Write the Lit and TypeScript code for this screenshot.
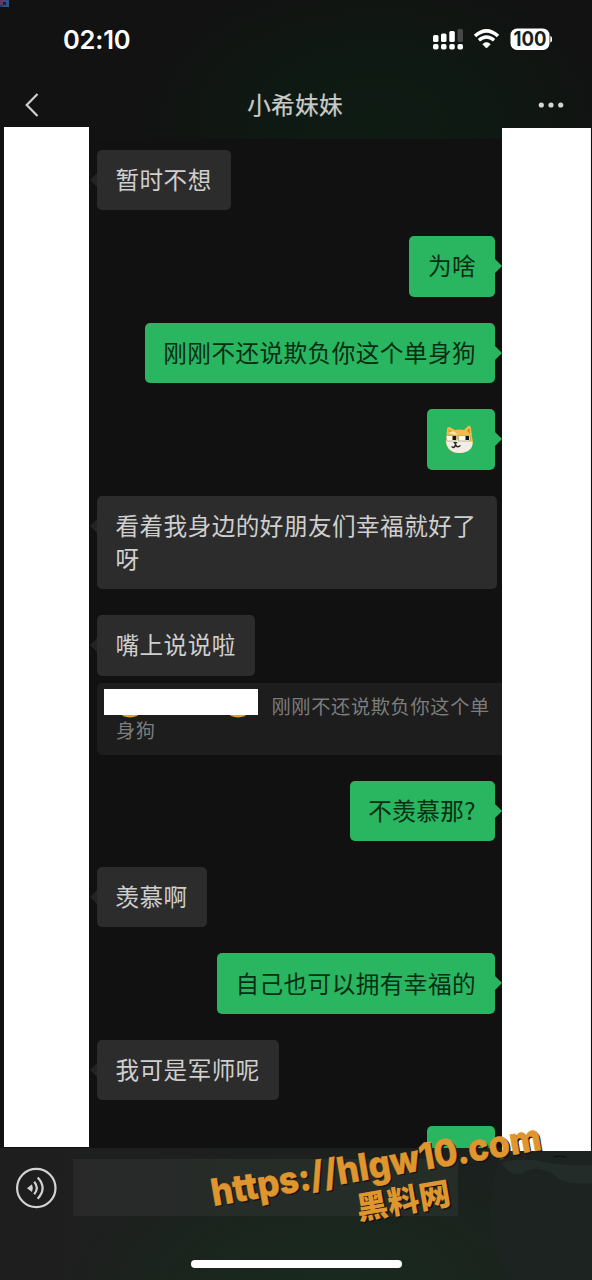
import { LitElement, html, svg, css } from "lit";
import { customElement, property } from "lit/decorators.js";

type Message = { side: "in" | "out"; text?: string; kind?: "doge" | "cut"; quote?: boolean };

const MESSAGES: Message[] = [
  { side: "in", text: "暂时不想" },
  { side: "out", text: "为啥" },
  { side: "out", text: "刚刚不还说欺负你这个单身狗" },
  { side: "out", kind: "doge" },
  { side: "in", text: "看着我身边的好朋友们幸福就好了呀" },
  { side: "in", text: "嘴上说说啦", quote: true },
  { side: "out", text: "不羡慕那?" },
  { side: "in", text: "羡慕啊" },
  { side: "out", text: "自己也可以拥有幸福的" },
  { side: "in", text: "我可是军师呢" },
  { side: "out", kind: "cut" },
];

const doge = svg`
  <path d="M2 4 Q2.500 1.500 4.500 2 L10 5 Q14 3.800 19 5 L23.500 .8 Q25.500 .3 26 3 L27 12 Q29 18 26 23 Q22 28 14 28 Q5 27.500 2 21 Q0 17 1.500 11 Z" fill="#f5bd45"/>
  <path d="M22 5.500 L24.500 3 L25 9 Z" fill="#c98528"/>
  <path d="M3.500 4 L7 6 L3.500 9 Z" fill="#dfa033"/>
  <path d="M1 15 Q6 9 13 15 Q20 15 27.500 17 Q28 23 23 26 Q18 28.300 12 27.800 Q4 27 1.800 20 Z" fill="#f0eee6"/>
  <path d="M3 8 Q10 4 12 10 Z" fill="#ffe9a8"/>
  <path d="M1 10.500 H11 V16 H2 Z M13.500 10.500 H25 V16 H13.500 Z" fill="#fffbe6" stroke="#a5987c" stroke-width=".7"/>
  <path d="M7.500 11 h3.500 v4 h-3.500z M20.500 11 h3.500 v4 h-3.500z" fill="#151515"/>
  <path d="M8 17 h4.500 l-2 2.700z" fill="#332820"/>
  <path d="M6.500 21.500 Q9.500 24 10.500 19.500 Q12 23.500 15.500 20.500" fill="none" stroke="#332820" stroke-width="1.500"/>
`;

@customElement("chat-bubble")
export class ChatBubble extends LitElement {
  @property({ attribute: false }) message!: Message;

  static styles = css`
    :host { display: block; }
    .row { display: flex; }
    .row.out { justify-content: flex-end; padding-right: 7px; }
    .row.in { padding-left: 8px; }
    .bubble {
      position: relative;
      box-sizing: border-box;
      min-height: 60.5px;
      max-width: 399.5px;
      padding: 13.2px 19px 13.8px 18.5px;
      border-radius: 5px;
      font-size: 23.6px;
      line-height: 33.2px;
      letter-spacing: 0.46px;
      word-break: break-all;
    }
    .in .bubble { background: #2c2c2c; color: #cfcfcf; }
    .out .bubble { background: #2ab561; color: #052e12; }
    .bubble::after {
      content: "";
      position: absolute;
      top: 23px;
      border: 7.5px solid transparent;
    }
    .in .bubble::after { left: -7px; border-left: 0; border-right: 7px solid #232323; }
    .out .bubble::after { right: -7px; border-right: 0; border-left: 7px solid #2ab561; }
    .bubble.doge { width: 68.500px; padding: 16px 19px; }
    .bubble.doge svg { display: block; width: 29px; height: 29px; margin-left: -1px; }
    .bubble.cut { width: 68.500px; }
    .quote {
      box-sizing: border-box;
      height: 72px;
      margin: 7px 0 0 8px;
      padding: 11px 8px 10px 19px;
      border-radius: 5px 0 0 5px;
      background: #1d1d1d;
      color: #7c7c7c;
      font-size: 19.2px;
      line-height: 24.500px;
      letter-spacing: 0.66px;
      word-break: break-all;
    }
    .mask { display: inline-block; width: 153.500px; height: 29px; margin: -6px 14px -6px -12px; vertical-align: 2px; letter-spacing: 0; }
    .mask svg { display: block; }
  `;

  render() {
    const m = this.message;
    return html`
      <div class="row ${m.side}">
        <div class="bubble ${m.kind ?? ""}">${m.kind === "doge" ? html`<svg viewBox="0 0 29 29">${doge}</svg>` : m.text ?? ""}</div>
      </div>
      ${m.quote
        ? html`<div class="quote"><span class="mask"><svg width="154" height="29" viewBox="0 0 154 29">
            <ellipse cx="26" cy="24.500" rx="9" ry="3.900" fill="#dca43c"/>
            <ellipse cx="134" cy="24.500" rx="9" ry="3.900" fill="#dca43c"/>
            <rect width="154" height="26" fill="#fff"/></svg></span>刚刚不还说欺负你这个单身狗</div>`
        : ""}
    `;
  }
}

@customElement("app-root")
export class AppRoot extends LitElement {
  static styles = css`
    :host {
      display: block;
      font-family: "Noto Sans CJK SC", sans-serif;
    }
    .screen {
      position: relative;
      display: flex;
      flex-direction: column;
      width: 592px;
      height: 1280px;
      overflow: hidden;
      background: radial-gradient(ellipse 235px 145px at 375px 120px, #0e1b13 0, #0f1913 45%, #111211 100%) #111;
    }
    .corner { position: absolute; left: 0; top: 0; width: 9px; height: 7px; }
    .status { display: flex; align-items: center; height: 78px; padding: 0 40px 0 63px; }
    .time { flex: 1; margin-top: 2px; color: #fff; font: 600 25.500px/30px Inter, sans-serif; letter-spacing: -0.2px; }
    .signals { display: block; width: 120px; height: 24px; }
    .level { font: 700 20px Inter, sans-serif; }
    .nav { display: grid; grid-template-columns: 90px 1fr 90px; align-items: center; height: 49px; color: #c9cbc9; }
    .back { margin: 4px 0 0 24px; }
    .title { margin: 2px 2px 0 0; text-align: center; font-size: 23.600px; line-height: 34px; letter-spacing: 0.3px; font-weight: 400; -webkit-text-stroke: 0.25px #c9cbc9; }
    .more { margin: 4px 0 0 35px; }
    .body { display: grid; grid-template-columns: 85px 413px 89px; height: 1021px; padding-left: 4px; }
    .blank { height: 1020px; background: #fff; }
    .blank.right { height: 1023px; margin-top: 1px; position: relative; border-right: 1px solid #eee; box-sizing: border-box; z-index: 1; }
    .chat {
      display: flex;
      flex-direction: column;
      gap: 25.920px;
      box-sizing: border-box;
      height: 1009px;
      margin-top: 12px;
      padding-top: 10.700px;
      background: #111;
      overflow: hidden;
    }
    .chat > * { flex: none; }
    .composer {
      position: relative;
      flex: 1;
      display: flex;
      flex-direction: column;
      background: radial-gradient(ellipse 260px 130px at 330px 135px, #192a20 0, #1a241d 60%, #1e1e1e00 100%), linear-gradient(90deg, #1e1e1e 0, #1d201e 50%, #1b211e 85%);
    }
    .tools { display: flex; align-items: flex-start; gap: 16px; padding: 11px 0 0 15px; }
    .voice { margin-top: 8px; }
    .field { width: 385px; height: 57px; background: linear-gradient(90deg, #282828, #262d29 50%, #252d29); }
    .smear { position: absolute; left: 480px; top: 3px; }
    .home { width: 211px; height: 8px; margin: 44px 0 0 191px; border-radius: 4px; background: #fff; }
    .watermark { position: absolute; z-index: 2; left: 190px; top: 1100px; }
    .link { font: 800 35px Inter, sans-serif; }
    .site { font: 900 31.5px "Noto Sans CJK SC", sans-serif; }
  `;

  render() {
    return html`
      <div class="screen">
        <svg class="corner" viewBox="0 0 9 7">
          <rect width="9" height="7" fill="#315289"/><rect width="3" height="7" fill="#663760"/>
          <rect x="3" y="2" width="3" height="3" fill="#172238"/><rect y="5" width="3" height="2" fill="#213c70"/>
        </svg>
        <div class="status">
          <div class="time">02:10</div>
          <svg class="signals" viewBox="0 0 120 24">
            <g fill="#fff">
              <rect x="1" y="8" width="5.500" height="7" rx="1.500"/><rect x="9" y="6.500" width="5.500" height="8.500" rx="1.500"/>
              <rect x="17.300" y="4" width="5.500" height="11" rx="1.500"/><rect x="25.500" y="2" width="5.500" height="13" rx="1.500" fill="#454846"/>
              <rect x="1" y="17" width="5.500" height="5.500" rx="1.800"/><rect x="9" y="17" width="5.500" height="5.500" rx="1.800"/>
              <rect x="17.300" y="17" width="5.500" height="5.500" rx="1.800"/><rect x="25.500" y="17" width="5.500" height="5.500" rx="1.800"/>
              <path d="M50.800 17.200 Q54.500 14 58.200 17.200 L54.500 21Z" stroke="#fff" stroke-width=".8" stroke-linejoin="round"/>
              <rect x="78.500" y="1.500" width="39" height="21.500" rx="6.500"/><path d="M118.300 9 q2 .6 2 3.200 t-2 3.200z"/>
            </g>
            <path d="M43 9 Q54.500 -1.300 66 9" fill="none" stroke="#fff" stroke-width="3.600"/>
            <path d="M46.900 13.300 Q54.500 6.700 62.100 13.300" fill="none" stroke="#fff" stroke-width="3.300"/>
            <text class="level" x="81.500" y="19.300" textLength="33" lengthAdjust="spacingAndGlyphs" fill="#18201b">100</text>
          </svg>
        </div>
        <div class="nav">
          <svg class="back" width="16" height="26" viewBox="0 0 16 26"><path d="M13.500 2 L2.700 13 L13.500 24" fill="none" stroke="#d0d0d0" stroke-width="2.200"/></svg>
          <div class="title">小希妹妹</div>
          <svg class="more" width="28" height="8" viewBox="0 0 28 8" fill="#d4d4d4"><circle cx="4.300" cy="4" r="2.600"/><circle cx="14" cy="4" r="2.600"/><circle cx="23.700" cy="4" r="2.600"/></svg>
        </div>
        <div class="body">
          <div class="blank"></div>
          <div class="chat">${MESSAGES.map((m) => html`<chat-bubble .message=${m}></chat-bubble>`)}</div>
          <div class="blank right"></div>
        </div>
        <div class="composer">
          <svg class="smear" width="112" height="129" viewBox="0 0 112 129">
            <path d="M18 10 Q6 60 12 90 Q18 110 34 129 H112 V0 H24Z" fill="#1c2320"/>
            <path d="M22 12 Q40 6 60 10 Q80 15 112 14 V32 Q95 34 80 29 Q60 10 40 23 Q28 24 22 12Z" fill="#232c28"/>
            <path d="M20 8 l4 -1" stroke="#8b908d" fill="none"/>
            <path d="M73 6 q6 -2 14 0" stroke="#0d100e" fill="none"/>
          </svg>
          <div class="tools">
            <svg class="voice" width="42" height="42" viewBox="0 0 42 42" fill="none" stroke="#d2d2d2" stroke-width="2.200">
              <circle cx="21.300" cy="21" r="19.200"/>
              <path d="M12 21.200 L17 17.300 Q18.700 21 17 25Z" fill="#d2d2d2" stroke="none"/>
              <path d="M19.200 14.800 Q24.500 21 19.200 27.300" /><path d="M22.700 10.500 Q32.500 21 22.700 31.700"/>
            </svg>
            <div class="field"></div>
          </div>
          <div class="home"></div>
        </div>
        <svg class="watermark" width="370" height="140" viewBox="0 0 370 140">
          <g transform="translate(23.500 106) rotate(-9.700) scale(1 1.060)" fill="#15110a"><text class="link" x="1.500" y="1.500" textLength="334" lengthAdjust="spacingAndGlyphs" aria-hidden="true">https://hlgw10.com</text></g>
          <g transform="translate(23.500 106) rotate(-9.700) scale(1 1.060)" fill="#e0962f" stroke="#e0962f" stroke-width=".5"><text class="link" textLength="334" lengthAdjust="spacingAndGlyphs">https://hlgw10.com</text></g>
          <g transform="translate(168.500 120) rotate(-9.700)" fill="#15110a"><text class="site" x="1.500" y="1.500" textLength="95" aria-hidden="true">黑料网</text></g>
          <g transform="translate(168.500 120) rotate(-9.700)" fill="#e0962f"><text class="site" textLength="95">黑料网</text></g>
        </svg>
      </div>
    `;
  }
}
